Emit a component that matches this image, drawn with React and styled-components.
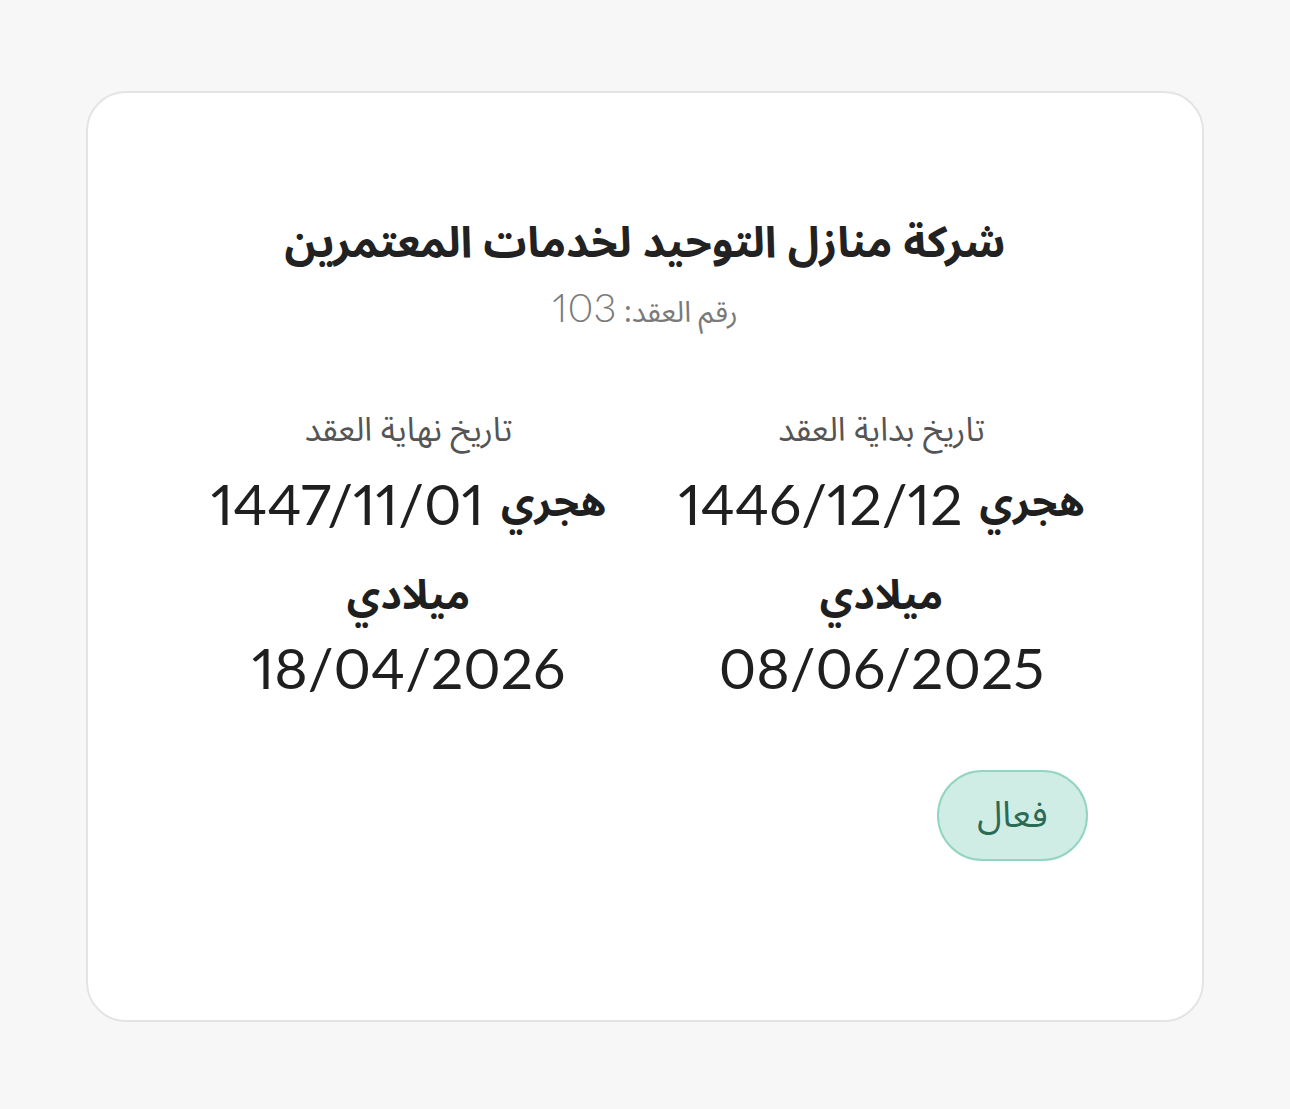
import React from "react";
import styled, { createGlobalStyle } from "styled-components";

const Global = createGlobalStyle`
  html, body { margin: 0; padding: 0; background: #f7f7f7; }
  body { font-family: "Noto Sans Arabic", "Noto Kufi Arabic", "DejaVu Sans", sans-serif; }
`;

const arabic = `"Noto Sans Arabic", "Noto Kufi Arabic", "DejaVu Sans", sans-serif`;
const digits = `Lato, "Noto Sans Arabic", "DejaVu Sans", sans-serif`;

const Page = styled.div`
  padding: 91px 86px 87px 86px;
  direction: rtl;
`;

const Card = styled.div`
  box-sizing: border-box;
  height: 931px;
  background: #fff;
  border: 2px solid #e4e4e4;
  border-radius: 40px;
  padding: 118px 84px 0 84px;
  display: flex;
  flex-direction: column;
  align-items: stretch;
`;

const Header = styled.div`
  display: flex;
  flex-direction: column;
  align-items: center;
  gap: 10px;
`;

const Title = styled.h1`
  margin: 0;
  font-family: ${arabic};
  font-weight: 700;
  font-size: 43px;
  line-height: 66px;
  color: #222;
`;

const Sub = styled.div`
  font-family: ${arabic};
  font-size: 29px;
  line-height: 46px;
  height: 46px;
  color: #7a7a7a;
`;

const Num = styled.span`
  font-family: ${digits};
  font-size: 40px;
  line-height: 40px;
  font-weight: 300;
  font-variant-numeric: proportional-nums;
`;

const Columns = styled.div`
  margin-top: 73px;
  display: grid;
  grid-template-columns: 1fr 1fr;
`;

const Col = styled.div`
  display: flex;
  flex-direction: column;
  align-items: center;
`;

const Label = styled.div`
  font-family: ${arabic};
  font-size: 33px;
  line-height: 50px;
  color: #555;
`;

const DateLine = styled.div`
  margin-top: 12px;
  display: flex;
  align-items: center;
  gap: 17px;
  color: #1f1f1f;
`;

const Tag = styled.span`
  font-family: ${arabic};
  font-weight: 700;
  font-size: 41px;
  line-height: 70px;
  color: #1f1f1f;
`;

const DateNum = styled.span`
  display: block;
  font-family: ${digits};
  font-size: 57px;
  line-height: 70px;
  font-weight: 400;
  font-variant-numeric: proportional-nums;
  direction: ltr;
  color: #1f1f1f;
  margin-top: ${(p) => p.$gap || 0}px;
`;

const GregLabel = styled(Tag)`
  margin-top: 23px;
  display: block;
`;

const BadgeRow = styled.div`
  margin-top: 68px;
  display: flex;
  justify-content: flex-start;
  padding-right: 30px;
`;

const Badge = styled.div`
  box-sizing: border-box;
  width: 151px;
  height: 91px;
  border-radius: 46px;
  background: #d0ede5;
  border: 2px solid #93d5c2;
  color: #2b6a55;
  font-family: ${arabic};
  font-size: 36px;
  display: flex;
  align-items: center;
  justify-content: center;
`;

const data = [
  { label: "تاريخ بداية العقد", hijri: "1446/12/12", greg: "08/06/2025" },
  { label: "تاريخ نهاية العقد", hijri: "1447/11/01", greg: "18/04/2026" },
];

export default function App() {
  return (
    <>
      <Global />
      <Page>
        <Card>
          <Header>
            <Title>شركة منازل التوحيد لخدمات المعتمرين</Title>
            <Sub>
              رقم العقد: <Num>103</Num>
            </Sub>
          </Header>
          <Columns>
            {data.map((d) => (
              <Col key={d.label}>
                <Label>{d.label}</Label>
                <DateLine>
                  <Tag>هجري</Tag>
                  <DateNum>{d.hijri}</DateNum>
                </DateLine>
                <GregLabel>ميلادي</GregLabel>
                <DateNum $gap={1}>{d.greg}</DateNum>
              </Col>
            ))}
          </Columns>
          <BadgeRow>
            <Badge>فعال</Badge>
          </BadgeRow>
        </Card>
      </Page>
    </>
  );
}
